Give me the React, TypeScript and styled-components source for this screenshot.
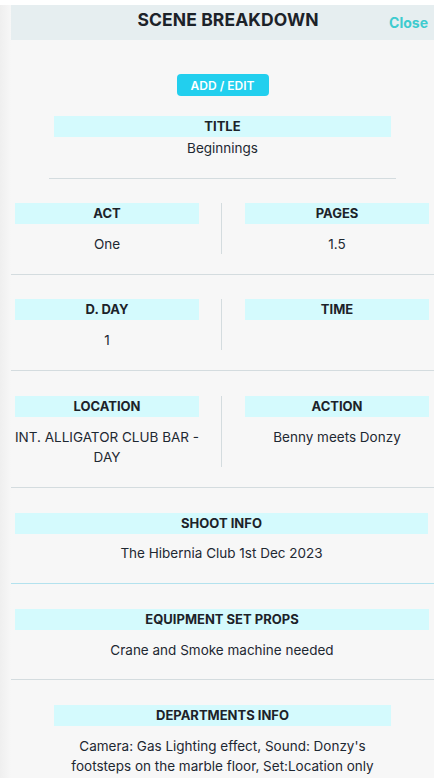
import React from 'react';
import styled, { createGlobalStyle } from 'styled-components';

const GlobalStyle = createGlobalStyle`
  html, body {
    margin: 0;
    padding: 0;
    background: #ffffff;
    font-family: Inter, 'Noto Sans', sans-serif;
    color: #1e2832;
  }
  * { box-sizing: border-box; }
`;

const Panel = styled.div`
  margin-top: 5px;
  height: 773px;
  overflow: hidden;
  background: linear-gradient(to right, #efefef 0px, #f7f7f7 11px);
  padding-left: 11px;
`;

const Header = styled.div`
  height: 35px;
  background: #e6eef0;
  display: grid;
  grid-template-columns: 1fr auto 1fr;
  align-items: center;
`;

const HeaderTitle = styled.h1`
  grid-column: 2;
  margin: 0 0 6px 11px;
  font-size: 17.5px;
  font-weight: 700;
  letter-spacing: 0.1px;
  color: #1c2229;
`;

const Close = styled.button`
  grid-column: 3;
  justify-self: end;
  margin: 0 6px 0 0;
  border: 0;
  background: none;
  padding: 0;
  font-family: inherit;
  font-size: 14px;
  font-weight: 700;
  color: #3ecbcf;
  cursor: pointer;
`;

const ButtonRow = styled.div`
  display: flex;
  justify-content: center;
  padding-top: 34px;
  padding-bottom: 20px;
`;

const AddButton = styled.button`
  width: 92px;
  height: 22px;
  border: 0;
  border-radius: 4px;
  background: #22cfee;
  color: #ffffff;
  font-family: inherit;
  font-size: 12px;
  font-weight: 600;
  cursor: pointer;
`;

const Section = styled.div<{ $line?: string; $inset?: number; $pad?: number; $top?: number }>`
  margin: 0 ${(p) => p.$inset ?? 0}px;
  padding-top: ${(p) => p.$top ?? 24}px;
  padding-bottom: ${(p) => p.$pad ?? 20}px;
  border-bottom: 1px solid ${(p) => p.$line ?? '#d4dcdf'};
`;

const TwoCols = styled.div`
  display: grid;
  grid-template-columns: 210px 1px 1fr;
`;

const VLine = styled.div`
  background: #d4dcdf;
`;

const Cell = styled.div<{ $l: number; $r: number }>`
  padding: 0 ${(p) => p.$r}px 0 ${(p) => p.$l}px;
`;

const Label = styled.div`
  height: 21px;
  line-height: 21px;
  background: #d4fafd;
  text-align: center;
  font-size: 13px;
  font-weight: 700;
  color: #1c2229;
`;

const Value = styled.div<{ $gap?: number }>`
  margin: ${(p) => p.$gap ?? 10}px -6px 0;
  min-height: 20px;
  line-height: 20px;
  text-align: center;
  font-size: 13.5px;
  color: #1e2832;
`;

type PairProps = { a: [string, string]; b: [string, string]; top?: number };

const Pair = ({ a, b, top }: PairProps) => (
  <Section $top={top}>
    <TwoCols>
      <Cell $l={4} $r={22}>
        <Label>{a[0]}</Label>
        <Value>{a[1]}</Value>
      </Cell>
      <VLine />
      <Cell $l={23} $r={5}>
        <Label>{b[0]}</Label>
        <Value>{b[1]}</Value>
      </Cell>
    </TwoCols>
  </Section>
);

export default function App() {
  return (
    <>
      <GlobalStyle />
      <Panel>
        <Header>
          <HeaderTitle>SCENE BREAKDOWN</HeaderTitle>
          <Close>Close</Close>
        </Header>
        <ButtonRow>
          <AddButton>ADD / EDIT</AddButton>
        </ButtonRow>
        <Section $inset={38} $top={0}>
          <Cell $l={5} $r={5}>
            <Label>TITLE</Label>
            <Value $gap={1}>Beginnings</Value>
          </Cell>
        </Section>
        <Pair a={['ACT', 'One']} b={['PAGES', '1.5']} />
        <Pair a={['D. DAY', '1']} b={['TIME', '']} />
        <Pair
          top={25}
          a={['LOCATION', 'INT. ALLIGATOR CLUB BAR - DAY']}
          b={['ACTION', 'Benny meets Donzy']}
        />
        <Section $line="#b3e2ee" $top={25}>
          <Cell $l={4} $r={6}>
            <Label>SHOOT INFO</Label>
            <Value $gap={9}>The Hibernia Club 1st Dec 2023</Value>
          </Cell>
        </Section>
        <Section $top={25} $pad={19}>
          <Cell $l={4} $r={5}>
            <Label>EQUIPMENT SET PROPS</Label>
            <Value>Crane and Smoke machine needed</Value>
          </Cell>
        </Section>
        <Section $line="transparent" $top={25}>
          <Cell $l={43} $r={43}>
            <Label>DEPARTMENTS INFO</Label>
            <Value>
              Camera: Gas Lighting effect, Sound: Donzy's footsteps on the marble floor, Set:Location only
            </Value>
          </Cell>
        </Section>
      </Panel>
    </>
  );
}
